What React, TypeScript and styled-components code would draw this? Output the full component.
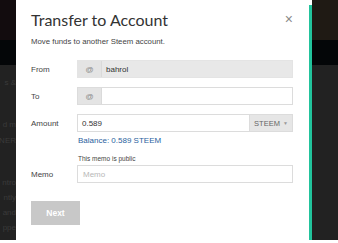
import React from "react";
import styled, { createGlobalStyle } from "styled-components";

const Global = createGlobalStyle`
  html, body { margin: 0; padding: 0; background: #ffffff; }
  body { font-family: "Liberation Sans", Arial, sans-serif; }
  * { box-sizing: border-box; }
`;

const Page = styled.div`
  width: 338px;
  height: 243px;
  display: flex;
  overflow: hidden;
  background: #ffffff;
`;

const Strip = styled.div<{ $top: string }>`
  height: 240px;
  background: linear-gradient(
    to bottom,
    ${(p) => p.$top} 0px,
    ${(p) => p.$top} 40px,
    #040608 40px,
    #040608 65px,
    #222222 65px,
    #222222 240px
  );
`;

const LeftStrip = styled(Strip)`
  width: 16px;
  display: flex;
  flex-direction: column;
  align-items: flex-end;
  overflow: hidden;
  padding-top: 78px;
`;

const RightStrip = styled(Strip)`
  flex: 1;
`;

const Ghost = styled.div<{ $gap: number }>`
  margin-top: ${(p) => p.$gap}px;
  font-size: 8px;
  line-height: 10px;
  color: #3a3a3a;
  white-space: nowrap;
`;

const Modal = styled.div`
  width: 296px;
  height: 235px;
  margin-top: 5px;
  background: #ffffff;
  border-right: 3px solid #22c39c;
  padding: 5px 16px 0 15px;
  display: flex;
  flex-direction: column;
  position: relative;
`;

const Close = styled.div`
  position: absolute;
  top: 7px;
  right: 16px;
  font-size: 14px;
  line-height: 14px;
  color: #8a8a8a;
`;

const Title = styled.h1`
  margin: 0;
  font-family: Lato, "Liberation Sans", sans-serif;
  font-weight: 400;
  font-size: 16px;
  line-height: 20px;
  color: #333333;
`;

const Subtitle = styled.p`
  margin: 7px 0 0;
  font-size: 7.8px;
  line-height: 10px;
  color: #444444;
`;

const Form = styled.div`
  margin-top: 13px;
  display: flex;
  flex-direction: column;
`;

const Row = styled.div<{ $mt?: number }>`
  display: grid;
  grid-template-columns: 46px 216px;
  align-items: center;
  margin-top: ${(p) => p.$mt ?? 0}px;
`;

const Label = styled.div`
  font-size: 8px;
  color: #444444;
`;

const Group = styled.div<{ $disabled?: boolean }>`
  height: 18px;
  display: flex;
  border: 1px solid ${(p) => (p.$disabled ? "#e4e4e4" : "#dcdcdc")};
  background: ${(p) => (p.$disabled ? "#e8e8e8" : "#ffffff")};
`;

const Addon = styled.div`
  width: 24px;
  display: flex;
  align-items: center;
  justify-content: center;
  background: #e4e4e4;
  border-right: 1px solid #dadada;
  font-size: 8px;
  color: #888888;
`;

const Value = styled.div<{ $placeholder?: boolean }>`
  flex: 1;
  display: flex;
  align-items: center;
  padding-left: ${(p) => (p.$placeholder ? 5 : 4)}px;
  font-size: 8px;
  color: ${(p) => (p.$placeholder ? "#b8b8b8" : "#333333")};
`;

const Select = styled.div`
  width: 43px;
  display: flex;
  align-items: center;
  justify-content: center;
  gap: 3px;
  background: #e6e6e6;
  border-left: 1px solid #dcdcdc;
  font-size: 7.5px;
  color: #666666;
`;

const Caret = styled.span`
  font-size: 5px;
  color: #999999;
`;

const Balance = styled.div`
  font-size: 8px;
  line-height: 10px;
  color: #2a5f9e;
  padding-left: 1px;
`;

const Hint = styled.div`
  font-size: 6.5px;
  line-height: 9px;
  color: #444444;
  padding-left: 1px;
`;

const Button = styled.button`
  margin-top: 18px;
  width: 49px;
  height: 24px;
  border: none;
  background: #c8c8c8;
  color: #ffffff;
  font-family: "Liberation Sans", Arial, sans-serif;
  font-weight: 700;
  font-size: 8.5px;
  padding: 0;
`;

export default function App() {
  return (
    <>
      <Global />
      <Page>
        <LeftStrip $top="#120c0e">
          <Ghost $gap={0}>s &amp;</Ghost>
          <Ghost $gap={32}>d m</Ghost>
          <Ghost $gap={6}>NER</Ghost>
          <Ghost $gap={32}>ntro</Ghost>
          <Ghost $gap={5}>ntly</Ghost>
          <Ghost $gap={5}>and</Ghost>
          <Ghost $gap={5}>ppe</Ghost>
        </LeftStrip>
        <Modal>
          <Close>×</Close>
          <Title>Transfer to Account</Title>
          <Subtitle>Move funds to another Steem account.</Subtitle>
          <Form>
            <Row>
              <Label>From</Label>
              <Group $disabled>
                <Addon>@</Addon>
                <Value>bahrol</Value>
              </Group>
            </Row>
            <Row $mt={9}>
              <Label>To</Label>
              <Group>
                <Addon>@</Addon>
                <Value />
              </Group>
            </Row>
            <Row $mt={9}>
              <Label>Amount</Label>
              <Group>
                <Value>0.589</Value>
                <Select>
                  STEEM <Caret>▼</Caret>
                </Select>
              </Group>
            </Row>
            <Row $mt={4}>
              <span />
              <Balance>Balance: 0.589 STEEM</Balance>
            </Row>
            <Row $mt={8}>
              <span />
              <Hint>This memo is public</Hint>
            </Row>
            <Row $mt={2}>
              <Label>Memo</Label>
              <Group>
                <Value $placeholder>Memo</Value>
              </Group>
            </Row>
          </Form>
          <Button>Next</Button>
        </Modal>
        <RightStrip $top="#1f1a14" />
      </Page>
    </>
  );
}
